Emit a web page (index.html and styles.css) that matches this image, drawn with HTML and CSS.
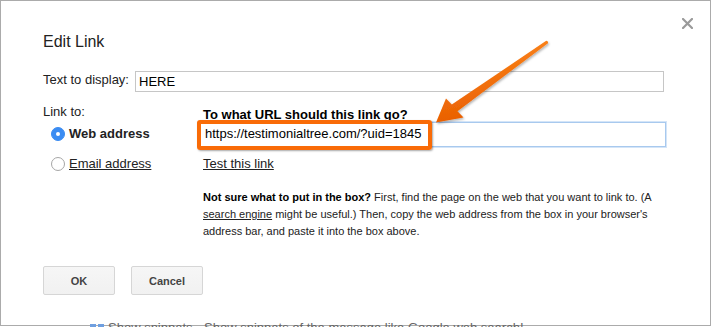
FILE: index.html
```html
<!DOCTYPE html>
<html>
<head>
<meta charset="utf-8">
<link rel="stylesheet" href="styles.css">
</head>
<body>
<div class="under">
  <span class="under-icon"><i></i><i></i></span>
  <span>Show snippets - Show snippets of the message like Google web search!.</span>
</div>
<div class="dialog">
  <svg class="close" width="11" height="11" viewBox="0 0 11 11"><path d="M1 1L10 10M10 1L1 10" stroke="#9a9a9a" stroke-width="2.2" stroke-linecap="square"/></svg>
  <h1 class="title">Edit Link</h1>
  <div class="display-row">
    <label class="display-label">Text to display:</label>
    <div class="text-input display-input">HERE</div>
  </div>
  <div class="link-section">
    <div class="link-left">
      <div class="link-to">Link to:</div>
      <div class="radio-row first">
        <span class="radio checked"></span>
        <span class="radio-label bold">Web address</span>
      </div>
      <div class="radio-row">
        <span class="radio"></span>
        <span class="radio-label underline">Email address</span>
      </div>
    </div>
    <div class="link-right">
      <div class="url-heading">To what URL should this link go?</div>
      <div class="url-wrap">
        <div class="text-input url-input">https://testimonialtree.com/?uid=1845</div>
        <div class="highlight"></div>
      </div>
      <div class="test-link">Test this link</div>
      <p class="help"><b>Not sure what to put in the box?</b> First, find the page on the web that you want to link to. (A <span class="underline">search engine</span> might be useful.) Then, copy the web address from the box in your browser's address bar, and paste it into the box above.</p>
    </div>
  </div>
  <div class="buttons">
    <button class="btn">OK</button>
    <button class="btn">Cancel</button>
  </div>
</div>
<svg class="arrow" width="711" height="327" viewBox="0 0 711 327">
  <defs>
    <linearGradient id="og" x1="0" y1="0" x2="0.3" y2="1">
      <stop offset="0" stop-color="#ff8c1f"/>
      <stop offset="1" stop-color="#e85d00"/>
    </linearGradient>
    <filter id="sh" x="-20%" y="-20%" width="140%" height="140%">
      <feDropShadow dx="1" dy="1.5" stdDeviation="1" flood-color="#000" flood-opacity="0.3"/>
    </filter>
  </defs>
  <path filter="url(#sh)" fill="url(#og)" d="M546.2 40.8 Q548.5 41.2 548 43.2 L457.5 111.2 L463.5 117.5 L436 122.5 L446 98.5 L451.8 104.4 Z"/>
</svg>
</body>
</html>
```
FILE: styles.css
```css
html, body {
  margin: 0;
  padding: 0;
}
body {
  width: 711px;
  height: 327px;
  overflow: hidden;
  position: relative;
  background: #fff;
  font-family: "Liberation Sans", Arial, sans-serif;
  font-size: 13px;
  color: #222;
}
.under {
  position: absolute;
  left: 90px;
  top: 320px;
  z-index: 2;
  display: flex;
  align-items: center;
  gap: 4px;
  color: #666;
  font-size: 13px;
  line-height: 16px;
}
.under-icon {
  display: flex;
  gap: 2px;
}
.under-icon i {
  display: block;
  width: 6px;
  height: 8px;
  background: #6f9fe0;
}
.dialog {
  position: relative;
  box-sizing: border-box;
  width: 711px;
  height: 326px;
  border: 1px solid #ababab;
  background: #fff;
  padding: 31px 0 0 42px;
}
.close {
  position: absolute;
  top: 17px;
  right: 17px;
}
.title {
  margin: 0;
  font-size: 16px;
  line-height: 20px;
  font-weight: normal;
  color: #222;
}
.display-row {
  display: flex;
  align-items: flex-start;
  gap: 6px;
  margin-top: 19px;
}
.display-label {
  line-height: 16px;
  padding-top: 1px;
}
.text-input {
  box-sizing: border-box;
  background: #fff;
  color: #000;
  line-height: 16px;
}
.display-input {
  width: 529px;
  height: 21px;
  border: 1px solid #c6c6c6;
  padding: 2px 3px;
}
.link-section {
  display: grid;
  grid-template-columns: 160px 463px;
  margin-top: 12px;
}
.link-to {
  line-height: 16px;
}
.radio-row {
  display: flex;
  align-items: center;
  gap: 4px;
  padding-left: 8px;
  line-height: 16px;
  margin-top: 14px;
}
.radio-row.first {
  margin-top: 6px;
}
.radio {
  box-sizing: border-box;
  width: 14px;
  height: 14px;
  border-radius: 50%;
  border: 1px solid #a6a6a6;
  background: #fff;
  display: flex;
  align-items: center;
  justify-content: center;
}
.radio.checked {
  border-color: #3b8cf2;
  background: #3b8cf2;
}
.radio.checked::after {
  content: "";
  width: 4px;
  height: 4px;
  border-radius: 50%;
  background: #fff;
}
.bold {
  font-weight: bold;
}
.underline {
  text-decoration: underline;
}
.link-right {
  padding-top: 4px;
}
.url-heading {
  font-weight: bold;
  line-height: 14px;
  color: #000;
}
.url-wrap {
  position: relative;
  margin-left: -4px;
  width: 467px;
}
.url-input {
  width: 467px;
  height: 25px;
  border: 1px solid #a8c9ee;
  box-shadow: 0 0 0 1px #d4e5f8;
  padding: 3px 5px;
}
.highlight {
  position: absolute;
  left: -2px;
  top: -2px;
  width: 235px;
  height: 30px;
  box-sizing: border-box;
  border: 4px solid #f96b07;
  border-radius: 3px;
  box-shadow: 1px 1px 2px rgba(0, 0, 0, 0.35);
}
.test-link {
  margin-top: 9px;
  line-height: 16px;
  text-decoration: underline;
}
.help {
  margin: 17px 0 0;
  font-size: 11px;
  line-height: 17px;
  color: #222;
}
.help b {
  color: #000;
}
.buttons {
  display: flex;
  gap: 16px;
  margin-top: 26px;
}
.btn {
  box-sizing: border-box;
  width: 72px;
  height: 29px;
  border: 1px solid #d6d6d6;
  border-radius: 2px;
  background: linear-gradient(#f6f6f6, #f1f1f1);
  font-family: "Liberation Sans", Arial, sans-serif;
  font-size: 11px;
  font-weight: bold;
  color: #444;
  padding: 0;
}
.arrow {
  position: absolute;
  left: 0;
  top: 0;
  z-index: 3;
  pointer-events: none;
}
```
